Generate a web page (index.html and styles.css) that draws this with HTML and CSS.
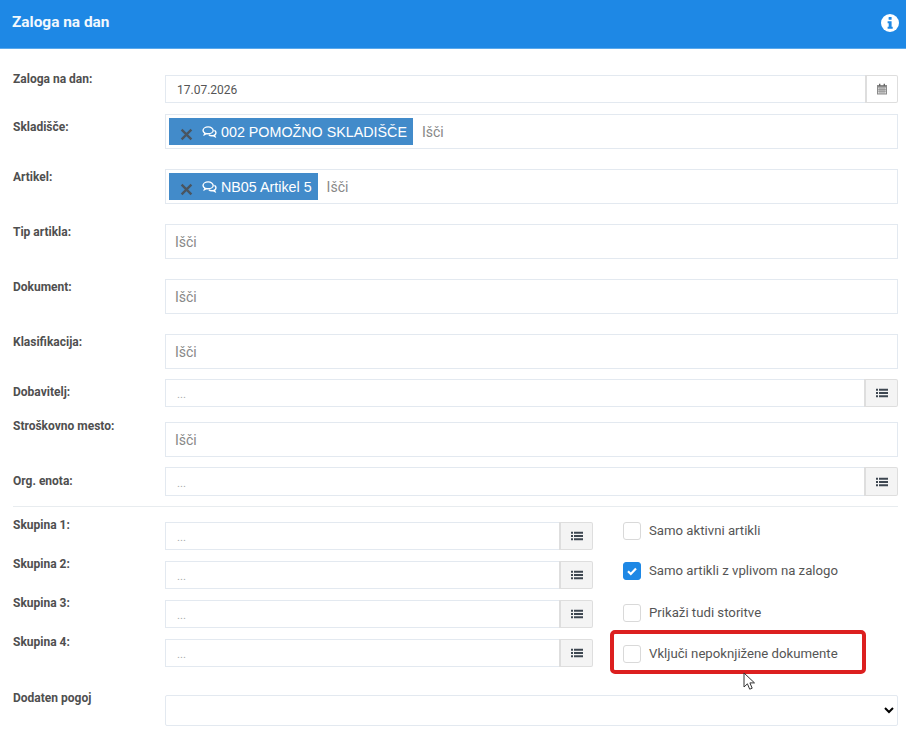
FILE: index.html
```html
<!DOCTYPE html>
<html lang="sl">
<head>
<meta charset="utf-8">
<title>Zaloga na dan</title>
<link rel="stylesheet" href="styles.css">
</head>
<body>
<header class="head">
  <h1 class="head-title">Zaloga na dan</h1>
  <svg class="info" viewBox="0 0 18 18" width="18" height="18"><circle cx="9" cy="9" r="9" fill="#fff"/><rect x="7.6" y="3" width="3" height="2.8" rx=".5" fill="#1e88e5"/><path d="M6.6 7.2h4v5.6h1.1v2H6.6v-2h1.1V9.200H6.600z" fill="#1e88e5"/></svg>
</header>
<main class="form">
  <div class="row gap-11"><label class="lbl up">Zaloga na dan:</label>
    <div class="group h28"><div class="ctl date">17.07.2026</div><button class="addon addon-white"><svg viewBox="0 0 12 12" width="12" height="12"><path d="M1 2h10v9.500H1z" fill="#8a8a8a"/><path d="M2 4.500h8v6H2z" fill="#ddd"/><path d="M2 6.300h8M2 8.200h8M4 4.500v6M6 4.500v6M8 4.500v6" stroke="#777" stroke-width=".6"/><path d="M3 .8h1.400v2.200H3zM7.600.8H9v2.200H7.600z" fill="#666"/></svg></button></div></div>
  <div class="row gap-20"><label class="lbl up off-9">Skladišče:</label>
    <div class="ctl tagbox"><span class="tag"><svg class="x" viewBox="0 0 12 12" width="13" height="13"><path d="M1.500 1.500l9 9M10.500 1.500l-9 9" stroke="#4a5560" stroke-width="2.200"/></svg><svg class="cm" viewBox="0 0 16 13" width="15" height="12"><path d="M6.500 1C3.500 1 1 2.700 1 4.800c0 1.200.8 2.200 2 2.900L2.400 9.400l2.300-1.200c.6.100 1.200.2 1.800.2 3 0 5.500-1.600 5.500-3.600S9.500 1 6.500 1z" fill="#428bca" stroke="#fff" stroke-width="1.500"/><path d="M13.300 4.800c1 .6 1.700 1.500 1.700 2.600 0 1-.6 1.900-1.600 2.500l.6 1.600-2.200-1.100c-1.400.3-3.400.1-4.500-.9" fill="none" stroke="#fff" stroke-width="1.500"/></svg>002 POMOŽNO SKLADIŠČE</span><span class="ph">Išči</span></div></div>
  <div class="row gap-20"><label class="lbl up off-4">Artikel:</label>
    <div class="ctl tagbox"><span class="tag"><svg class="x" viewBox="0 0 12 12" width="13" height="13"><path d="M1.500 1.500l9 9M10.500 1.500l-9 9" stroke="#4a5560" stroke-width="2.200"/></svg><svg class="cm" viewBox="0 0 16 13" width="15" height="12"><path d="M6.500 1C3.500 1 1 2.700 1 4.800c0 1.200.8 2.200 2 2.900L2.400 9.400l2.300-1.200c.6.100 1.200.2 1.800.2 3 0 5.500-1.600 5.500-3.600S9.500 1 6.500 1z" fill="#428bca" stroke="#fff" stroke-width="1.500"/><path d="M13.300 4.800c1 .6 1.700 1.500 1.700 2.600 0 1-.6 1.900-1.600 2.500l.6 1.600-2.200-1.100c-1.400.3-3.400.1-4.500-.9" fill="none" stroke="#fff" stroke-width="1.500"/></svg>NB05 Artikel 5</span><span class="ph">Išči</span></div></div>
  <div class="row gap-20"><label class="lbl up off-4">Tip artikla:</label><div class="ctl search"><span class="ph">Išči</span></div></div>
  <div class="row gap-20"><label class="lbl up off-4">Dokument:</label><div class="ctl search"><span class="ph">Išči</span></div></div>
  <div class="row gap-10"><label class="lbl up off-4">Klasifikacija:</label><div class="ctl search"><span class="ph">Išči</span></div></div>
  <div class="row gap-15"><label class="lbl up off-9">Dobavitelj:</label>
    <div class="group h28"><div class="ctl dots">...</div><button class="addon"><svg viewBox="0 0 12 10" width="12" height="10"><use href="#li"/></svg></button></div></div>
  <div class="row gap-10"><label class="lbl up">Stroškovno mesto:</label><div class="ctl search"><span class="ph">Išči</span></div></div>
  <div class="row gap-10"><label class="lbl up off-10">Org. enota:</label>
    <div class="group h29"><div class="ctl dots">...</div><button class="addon"><svg viewBox="0 0 12 10" width="12" height="10"><use href="#li"/></svg></button></div></div>
  <hr class="sep">
  <div class="split">
    <div class="groups">
      <div class="row-g"><label class="lbl">Skupina 1:</label><div class="group h28"><div class="ctl dots">...</div><button class="addon"><svg viewBox="0 0 12 10" width="12" height="10"><use href="#li"/></svg></button></div></div>
      <div class="row-g"><label class="lbl">Skupina 2:</label><div class="group h28"><div class="ctl dots">...</div><button class="addon"><svg viewBox="0 0 12 10" width="12" height="10"><use href="#li"/></svg></button></div></div>
      <div class="row-g"><label class="lbl">Skupina 3:</label><div class="group h28"><div class="ctl dots">...</div><button class="addon"><svg viewBox="0 0 12 10" width="12" height="10"><use href="#li"/></svg></button></div></div>
      <div class="row-g"><label class="lbl">Skupina 4:</label><div class="group h28"><div class="ctl dots">...</div><button class="addon"><svg viewBox="0 0 12 10" width="12" height="10"><use href="#li"/></svg></button></div></div>
    </div>
    <div class="checks">
      <div class="chk mb-22"><span class="box"></span><span class="chk-text">Samo aktivni artikli</span></div>
      <div class="chk mb-24"><span class="box on"><svg viewBox="0 0 12 12" width="12" height="12"><path d="M2 6.300l2.800 2.700L10 3.500" fill="none" stroke="#fff" stroke-width="2.200"/></svg></span><span class="chk-text">Samo artikli z vplivom na zalogo</span></div>
      <div class="chk mb-23"><span class="box"></span><span class="chk-text">Prikaži tudi storitve</span></div>
      <div class="chk"><span class="box"></span><span class="chk-text">Vključi nepoknjižene dokumente</span></div>
    </div>
  </div>
  <div class="row last"><label class="lbl">Dodaten pogoj</label><select class="sel"><option></option></select></div>
</main>
<div class="mark"></div>
<svg class="cursor" viewBox="0 0 14 20" width="14" height="20"><path d="M1 1v14l3.400-3.200 2.300 5.400 2.500-1-2.300-5.300H11.500z" fill="#fff" stroke="#333" stroke-width="1"/></svg>
<svg class="defs" width="0" height="0"><defs><g id="li" fill="#3d4650"><path d="M0 .8h2v2H0zM0 4h2v2H0zM0 7.200h2v2H0zM3 .8h9v2H3zM3 4h9v2H3zM3 7.200h9v2H3z"/></g></defs></svg>
</body>
</html>
```
FILE: styles.css
```css
* { box-sizing: border-box; }
html, body { margin: 0; padding: 0; }
body { width: 906px; height: 738px; overflow: hidden; background: #fff; position: relative; font-family: Roboto, "Liberation Sans", sans-serif; color: #555; }
.head { height: 49px; background: #1e88e5; border-bottom: 1px solid #5aa9ec; display: flex; align-items: center; justify-content: space-between; padding: 0 7px 4px 12px; }
.head-title { margin: 0; font-size: 15.400px; font-weight: 700; color: #f2f8fd; }
.info { display: block; margin-top: 2px; }
.form { padding: 26px 8px 0 13px; }
.row { display: grid; grid-template-columns: 152px 1fr; }
.gap-10 { margin-bottom: 10px; }
.gap-11 { margin-bottom: 11px; }
.gap-15 { margin-bottom: 15px; }
.gap-20 { margin-bottom: 20px; }
.lbl { font-size: 12px; font-weight: 700; color: #4f4f4f; line-height: 14px; margin-top: -4px; }
.lbl.up { margin-top: -3px; }
.off-4 { padding-top: 4px; }
.off-9 { padding-top: 9px; }
.off-10 { padding-top: 10px; }
.ctl { border: 1px solid #e3e9f0; background: #fff; font-size: 12px; color: #555; }
.group { display: flex; }
.h28 { height: 28px; }
.h29 { height: 29px; }
.group .ctl { flex: 1; border-right: 0; display: flex; align-items: center; padding-left: 11px; }
.group .date { padding-top: 1px; }
.group .dots { color: #aaa; font-size: 11.500px; padding-top: 2px; }
.addon { width: 34px; height: 100%; padding: 0; border: 1px solid #dedede; border-left-width: 2px; border-radius: 0 2px 2px 0; background: #f4f4f4; display: flex; align-items: center; justify-content: center; }
.addon-white { background: #fff; width: 33px; }
.tagbox { height: 35px; display: flex; align-items: center; padding-left: 3px; }
.tag { height: 27px; background: #428bca; color: #fff; font-family: "Liberation Sans", Arial, sans-serif; font-size: 14.300px; display: flex; align-items: center; padding: 0 6px 0 11px; }
.x { margin-right: 9px; margin-top: 5px; }
.cm { margin-right: 4px; }
.ph { font-size: 14px; color: #888; margin-left: 9px; }
.search { height: 35px; display: flex; align-items: center; }
.sep { border: 0; border-top: 1px solid #e8ecef; margin: 0 -5px 15px 0; height: 0; width: 100%; }
.split { display: flex; }
.groups { width: 580px; display: flex; flex-direction: column; gap: 11px; }
.row-g { display: grid; grid-template-columns: 152px 1fr; }
.checks { padding-left: 30px; display: flex; flex-direction: column; }
.chk { display: flex; align-items: center; font-size: 13.200px; color: #555; height: 18px; white-space: nowrap; }
.chk-text { margin-top: -2px; }
.mb-22 { margin-bottom: 22px; }
.mb-23 { margin-bottom: 23px; }
.mb-24 { margin-bottom: 24px; }
.box { width: 18px; height: 18px; border: 1px solid #d9d9d9; border-radius: 3px; background: #fff; margin-right: 8px; display: flex; align-items: center; justify-content: center; }
.box.on { background: #1e88e5; border-color: #1e88e5; }
.last { margin-top: 28px; }
.sel { height: 31px; width: 100%; border: 1px solid #e3e9f0; background: #fff; border-radius: 2px; }
.mark { position: absolute; left: 610px; top: 630px; width: 256px; height: 44px; border: 4px solid #dc1f1f; border-radius: 5px; }
.cursor { position: absolute; left: 743px; top: 672px; }
.defs { position: absolute; }
```
